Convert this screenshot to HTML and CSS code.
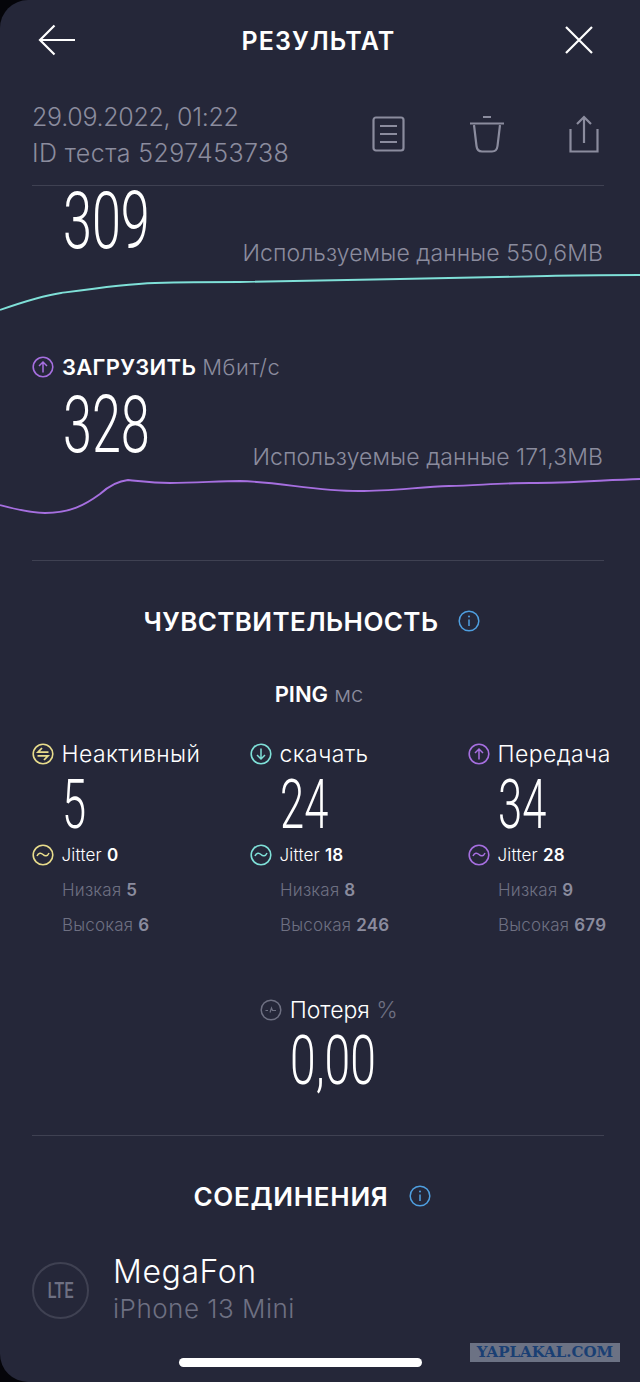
FILE: index.html
```html
<!DOCTYPE html>
<html lang="ru">

<head>
    <meta charset="UTF-8">
    <meta name="viewport" content="width=device-width, initial-scale=1.0">
    <link rel="stylesheet" href="styles.css">
    <title>Результат</title>
</head>

<body>

    <svg class="defs" width="0" height="0">
        <symbol id="i-up" viewBox="0 0 22 22">
            <circle cx="11" cy="11" r="9.8" fill="none" stroke="currentColor" stroke-width="1.6"/>
            <path d="M11 16.500V6M7 10l4-4 4 4" fill="none" stroke="currentColor" stroke-width="1.5"/>
        </symbol>
        <symbol id="i-down" viewBox="0 0 22 22">
            <circle cx="11" cy="11" r="9.8" fill="none" stroke="currentColor" stroke-width="1.6"/>
            <path d="M11 5.500V16M7 12l4 4 4-4" fill="none" stroke="currentColor" stroke-width="1.5"/>
        </symbol>
        <symbol id="i-idle" viewBox="0 0 22 22">
            <circle cx="11" cy="11" r="9.8" fill="none" stroke="currentColor" stroke-width="1.6"/>
            <path d="M16.500 9.200H6l4-4.200M5.500 12.800H16l-4 4.200" fill="none" stroke="currentColor" stroke-width="1.800"/>
        </symbol>
        <symbol id="i-jitter" viewBox="0 0 22 22">
            <circle cx="11" cy="11" r="9.800" fill="none" stroke="currentColor" stroke-width="1.6"/>
            <path d="M5 12c1.500-3.500 4-3.500 6-1.500s4.500 2 6-1.500" fill="none" stroke="currentColor" stroke-width="1.5"/>
        </symbol>
        <symbol id="i-info" viewBox="0 0 22 22">
            <circle cx="11" cy="11" r="9.800" fill="none" stroke="currentColor" stroke-width="1.5"/>
            <path d="M11 9.500V16" stroke="currentColor" stroke-width="1.500"/>
            <circle cx="11" cy="6.500" r="1" fill="currentColor"/>
        </symbol>
    </svg>

    <div class="screen">

        <header class="topbar">
            <svg class="back" width="37" height="32" viewBox="0 0 37 32">
                <path d="M37 16H2M16.500 1.500 2 16l14.500 14.500" fill="none" stroke="#fff" stroke-width="2.200"/>
            </svg>
            <h1 class="topbar-title">РЕЗУЛЬТАТ</h1>
            <svg class="close" width="28" height="28" viewBox="0 0 28 28">
                <path d="M1 1l26 26M27 1 1 27" fill="none" stroke="#fff" stroke-width="2.200"/>
            </svg>
        </header>

        <div class="meta">
            <div class="meta-text">
                <div class="meta-date">29.09.2022, 01:22</div>
                <div class="meta-id">ID теста 5297453738</div>
            </div>
            <div class="meta-actions">
                <svg width="33" height="36" viewBox="0 0 33 36">
                    <rect x="1.500" y="1.500" width="30" height="33" rx="2.500" fill="none" stroke="#8b8c9e" stroke-width="2.200"/>
                    <path d="M8 10h17M8 18h17M8 26h17" stroke="#8b8c9e" stroke-width="2.200"/>
                </svg>
                <svg width="34" height="38" viewBox="0 0 34 38">
                    <path d="M0 8.500h34M13 2h8" stroke="#8b8c9e" stroke-width="2.200"/>
                    <path d="M4 10l2.500 21c.4 3.500 2.500 5.500 5.500 5.500h10c3 0 5.100-2 5.500-5.500L30 10" fill="none" stroke="#8b8c9e" stroke-width="2.200"/>
                </svg>
                <svg width="30" height="38" viewBox="0 0 30 38">
                    <path d="M15 28V2M8 9l7-7 7 7" fill="none" stroke="#8b8c9e" stroke-width="2.200"/>
                    <path d="M1.500 14v22.500h27V14" fill="none" stroke="#8b8c9e" stroke-width="2.200"/>
                </svg>
            </div>
        </div>

        <section class="speed speed-down">
            <div class="num num-big">309</div>
            <div class="used">Используемые данные 550,6MB</div>
            <svg class="graph graph-down" width="640" height="49" viewBox="0 0 640 49">
                <path d="M0 43C20 36 40 29 61 26C90 22 125 17 155 16C190 15 215 15 240 15C300 14 350 13 400 12C450 11 500 10 547 9C580 8 610 8 640 8" fill="none" stroke="#7fe0d8" stroke-width="1.800"/>
            </svg>
        </section>

        <section class="speed speed-up">
            <div class="speed-label">
                <svg class="ico purple" width="22" height="22"><use href="#i-up"/></svg>
                <b>ЗАГРУЗИТЬ</b> <span>Мбит/с</span>
            </div>
            <div class="num num-big">328</div>
            <div class="used">Используемые данные 171,3MB</div>
            <svg class="graph" width="640" height="50" viewBox="0 0 640 50">
                <path d="M0 35C15 39 30 43 45 43C70 43 85 35 100 24C110 15 118 11 128 10C140 11 150 13 170 13C195 13 220 11 240 11C280 12 315 21 359 21C390 21 420 17 449 16C480 15 505 13 530 13C570 13 605 10 640 9" fill="none" stroke="#a66fe0" stroke-width="1.800"/>
            </svg>
        </section>

        <hr class="line line-a">

        <h2 class="heading heading-a">ЧУВСТВИТЕЛЬНОСТЬ
            <svg class="ico blue" width="22" height="22"><use href="#i-info"/></svg>
        </h2>

        <div class="ping"><b>PING</b> <span>мс</span></div>

        <div class="columns">
            <div class="col">
                <div class="col-label"><svg class="ico yellow" width="22" height="22"><use href="#i-idle"/></svg>Неактивный</div>
                <div class="num num-mid">5</div>
                <div class="jitter"><svg class="ico yellow" width="22" height="22"><use href="#i-jitter"/></svg><span>Jitter <b>0</b></span></div>
                <div class="stat">Низкая <b>5</b></div>
                <div class="stat">Высокая <b>6</b></div>
            </div>
            <div class="col">
                <div class="col-label"><svg class="ico cyan" width="22" height="22"><use href="#i-down"/></svg>скачать</div>
                <div class="num num-mid">24</div>
                <div class="jitter"><svg class="ico cyan" width="22" height="22"><use href="#i-jitter"/></svg><span>Jitter <b>18</b></span></div>
                <div class="stat">Низкая <b>8</b></div>
                <div class="stat">Высокая <b>246</b></div>
            </div>
            <div class="col">
                <div class="col-label"><svg class="ico purple" width="22" height="22"><use href="#i-up"/></svg>Передача</div>
                <div class="num num-mid">34</div>
                <div class="jitter"><svg class="ico purple" width="22" height="22"><use href="#i-jitter"/></svg><span>Jitter <b>28</b></span></div>
                <div class="stat">Низкая <b>9</b></div>
                <div class="stat">Высокая <b>679</b></div>
            </div>
        </div>

        <div class="loss">
            <div class="loss-label">
                <svg class="ico grey" width="22" height="22" viewBox="0 0 22 22">
                    <circle cx="11" cy="11" r="9.800" fill="none" stroke="currentColor" stroke-width="1.500"/>
                    <path d="M5.500 11.500h2.500M10 13.500l1.500-4.500 1 2.500H16" fill="none" stroke="currentColor" stroke-width="1.200"/>
                </svg>
                <div>Потеря <span>%</span></div>
            </div>
            <div class="num num-mid loss-num">0,00</div>
        </div>

        <hr class="line line-b">

        <h2 class="heading heading-b">СОЕДИНЕНИЯ
            <svg class="ico blue" width="22" height="22"><use href="#i-info"/></svg>
        </h2>

        <div class="conn">
            <div class="conn-badge"><span>LTE</span></div>
            <div>
                <div class="conn-name">MegaFon</div>
                <div class="conn-device">iPhone 13 Mini</div>
            </div>
        </div>

        <div class="homebar"></div>
        <div class="watermark">YAPLAKAL.COM</div>

    </div>

</body>
</html>
```

FILE: styles.css
```css
* {
    box-sizing: border-box;
}

body {
    margin: 0;
    background: #05050a;
    font-family: "Inter", "Liberation Sans", sans-serif;
    font-weight: 300;
    color: #fff;
}

.defs {
    position: absolute;
}

.screen {
    position: relative;
    width: 640px;
    height: 1382px;
    overflow: hidden;
    background: #252739;
    border-radius: 28px 0 0 28px;
}

.ico {
    flex: none;
}

.yellow { color: #e8dc8c; }
.cyan { color: #7fe0d8; }
.purple { color: #a66fe0; }
.blue { color: #4f9fe0; }
.grey { color: #6e7082; }

/* top bar */
.topbar {
    display: flex;
    align-items: center;
    justify-content: space-between;
    height: 80px;
    padding: 0 47px 0 38px;
}

.topbar-title {
    margin: 2px 3px 0 0;
    font-size: 25px;
    font-weight: 600;
    letter-spacing: 1.1px;
}

.meta {
    display: flex;
    justify-content: space-between;
    align-items: center;
    height: 88px;
    margin: 18px 36px 0 32px;
    padding-bottom: 15px;
    border-bottom: 1px solid #3f4152;
}

.meta-text {
    margin-top: 2px;
    font-size: 25px;
    line-height: 36px;
    color: #8b8c9e;
}

.meta-date {
    letter-spacing: -0.3px;
}

.meta-id {
    letter-spacing: 0.4px;
}

.meta-actions {
    display: flex;
    align-items: center;
    gap: 65px;
    margin-right: 5px;
}

/* speed blocks */
.num {
    font-family: "Roboto", sans-serif;
    font-weight: 300;
    color: #fff;
    transform-origin: left center;
    transform: scaleX(0.65);
}

.num-big {
    height: 60px;
    margin-left: 63px;
    font-size: 79px;
    line-height: 60px;
    transform: translateY(1px) scaleX(0.66);
}

.num-mid {
    height: 50px;
    margin-top: 10px;
    margin-left: 30px;
    font-size: 68px;
    line-height: 50px;
    transform: translateY(1px) scaleX(0.64);
}

.speed-down {
    padding-top: 4px;
}

.used {
    height: 26px;
    margin: -10px 37px 0 0;
    font-size: 23px;
    letter-spacing: 0.07px;
    line-height: 26px;
    text-align: right;
    color: #8b8c9e;
}

.graph {
    display: block;
}

.graph-down {
    margin-top: 1px;
}

.speed-label {
    display: flex;
    align-items: center;
    gap: 8px;
    height: 30px;
    margin: 36px 0 12px 32px;
    font-size: 22px;
    color: #8b8c9e;
}

.speed-label b {
    font-weight: 600;
    letter-spacing: 0.3px;
    color: #fff;
}

.speed-label span {
    margin-left: -2px;
    letter-spacing: 0.6px;
}

/* sections */
.line {
    height: 1px;
    margin: 0 36px 0 32px;
    border: none;
    background: #3f4152;
}

.line-a {
    margin-top: 40px;
}

.line-b {
    margin-top: 50px;
}

.heading {
    display: flex;
    justify-content: center;
    align-items: center;
    gap: 20px;
    height: 30px;
    margin: 45px 0 0;
    padding-right: 16px;
    font-size: 26px;
    font-weight: 600;
}

.heading-a {
    letter-spacing: 0.4px;
}

.heading-b {
    letter-spacing: 0.7px;
}

.ping {
    height: 24px;
    margin-top: 46px;
    padding-right: 2px;
    font-size: 22px;
    line-height: 24px;
    text-align: center;
    color: #8b8c9e;
}

.ping b {
    font-weight: 600;
    color: #fff;
}

/* ping columns */
.columns {
    display: grid;
    grid-template-columns: repeat(3, 218px);
    margin: 33px 0 0 32px;
}

.col-label {
    display: flex;
    align-items: center;
    gap: 7.5px;
    height: 30px;
    font-size: 23px;
    letter-spacing: 0.4px;
    white-space: nowrap;
}

.jitter {
    display: flex;
    align-items: center;
    gap: 7.5px;
    height: 26px;
    margin-top: 13px;
    font-size: 17px;
    letter-spacing: 0.2px;
}

.jitter b,
.stat b {
    font-weight: 600;
}

.stat {
    height: 26px;
    margin-top: 9px;
    padding-left: 30px;
    font-size: 17px;
    letter-spacing: 0.2px;
    line-height: 26px;
    color: #6e7082;
}

.stat b {
    color: #8b8c9e;
}

/* packet loss */
.loss {
    margin-top: 57px;
}

.loss-label {
    display: flex;
    align-items: center;
    justify-content: center;
    gap: 7.5px;
    height: 30px;
    padding-left: 18px;
    font-size: 23px;
}

.loss-label span {
    color: #6e7082;
}

.loss-num {
    margin-left: 290px;
    transform: translateY(1px) scaleX(0.68);
}

/* connection */
.conn {
    display: flex;
    align-items: center;
    gap: 24px;
    margin: 43px 0 0 32px;
}

.conn-badge {
    display: flex;
    align-items: center;
    justify-content: center;
    width: 57px;
    height: 57px;
    border: 2px solid #3f4152;
    border-radius: 50%;
    font-family: "Roboto", sans-serif;
    font-weight: 500;
    font-size: 22px;
    color: #6e7082;
}

.conn-badge span {
    transform: scaleX(0.75);
}

.conn-name {
    font-size: 32px;
    letter-spacing: 0.6px;
    line-height: 36px;
}

.conn-device {
    font-size: 26px;
    letter-spacing: 0.5px;
    line-height: 37px;
    color: #6e7082;
}

/* overlays */
.homebar {
    position: absolute;
    left: 179px;
    top: 1358px;
    width: 243px;
    height: 9px;
    border-radius: 5px;
    background: #fff;
}

.watermark {
    position: absolute;
    left: 470px;
    top: 1343px;
    width: 150px;
    height: 19px;
    background: #6c7284;
    font-family: "DejaVu Serif", serif;
    font-weight: 700;
    font-size: 15px;
    line-height: 19px;
    text-align: center;
    color: #1a3f73;
}
```
